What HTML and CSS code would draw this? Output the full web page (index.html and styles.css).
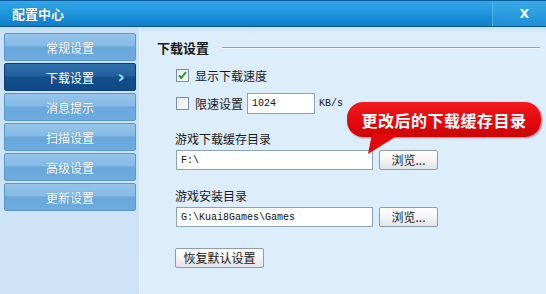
FILE: index.html
```html
<!DOCTYPE html>
<html lang="zh-CN">
<head>
<meta charset="utf-8">
<title>配置中心</title>
<link rel="stylesheet" href="styles.css">
</head>
<body>
<div class="window">
  <div class="titlebar">
    <span class="title">配置中心</span>
    <span class="close">X</span>
  </div>
  <div class="main">
    <nav class="sidebar">
      <div class="nav-item">常规设置</div>
      <div class="nav-item active">下载设置<span class="chev">›</span></div>
      <div class="nav-item">消息提示</div>
      <div class="nav-item">扫描设置</div>
      <div class="nav-item">高级设置</div>
      <div class="nav-item">更新设置</div>
    </nav>
    <section class="content">
      <div class="section-head"><span>下载设置</span><span class="rule"></span></div>
      <div class="check-row first">
        <span class="checkbox"><svg width="13" height="13" viewBox="0 0 13 13"><path d="M3 6.5 L5.3 9 L10 3.2" fill="none" stroke="#2f9a2a" stroke-width="2"/></svg></span>
        <span>显示下载速度</span>
      </div>
      <div class="check-row second">
        <span class="checkbox"></span>
        <span>限速设置</span>
        <span class="input small">1024</span>
        <span class="unit">KB/s</span>
      </div>
      <div class="field-label first-label">游戏下载缓存目录</div>
      <div class="path-row">
        <span class="input path">F:\</span>
        <span class="btn browse">浏览...</span>
      </div>
      <div class="field-label">游戏安装目录</div>
      <div class="path-row">
        <span class="input path">G:\Kuai8Games\Games</span>
        <span class="btn browse">浏览...</span>
      </div>
      <div class="restore-row"><span class="btn restore">恢复默认设置</span></div>

      <div class="bubble">
        <svg class="bubble-tail" width="40" height="22" viewBox="0 0 40 22"><path d="M6 0 L34 0 L2 20 Z" fill="#e4080c"/></svg>
        <span class="bubble-text">更改后的下载缓存目录</span>
      </div>
    </section>
  </div>
</div>
</body>
</html>
```

FILE: styles.css
```css
* { box-sizing: border-box; }
html, body { margin: 0; padding: 0; }
body {
  width: 546px;
  height: 294px;
  overflow: hidden;
  font-family: "Noto Sans CJK SC", "DejaVu Sans", sans-serif;
  font-size: 12px;
  color: #1a1a1a;
}
.window {
  width: 546px;
  height: 294px;
  display: flex;
  flex-direction: column;
  background: #dcedfb;
}
.titlebar {
  height: 27px;
  flex: none;
  display: flex;
  align-items: center;
  justify-content: space-between;
  background: linear-gradient(#33a7e8 0%, #1f97de 45%, #0f7dc9 100%);
  border-top: 1px solid #0b5c9c;
  border-bottom: 1px solid #0a558f;
  padding-left: 12px;
}
.title {
  color: #fff;
  font-weight: bold;
  font-size: 13px;
  line-height: 16px;
  text-shadow: 0 0 1px #0a4f86;
}
.close {
  width: 54px;
  height: 25px;
  display: flex;
  align-items: center;
  justify-content: center;
  color: #fff;
  font-family: "DejaVu Sans", sans-serif;
  font-weight: bold;
  font-size: 12px;
  border-left: 1px solid #4fb0e6;
  background: linear-gradient(#3aa9e7, #1e8fd8);
  padding-left: 10px;
}
.main {
  flex: 1;
  display: flex;
  background: linear-gradient(#c4e2f6 0px, #dcedfb 6px);
}
.sidebar {
  width: 140px;
  flex: none;
  display: flex;
  flex-direction: column;
  gap: 2px;
  padding: 6px 3px 0 4px;
  background: linear-gradient(#c2def4 0px, #cbe2f6 6px, #cfe5f7 100%);
  border-right: 1px solid #e6f2fc;
}
.nav-item {
  position: relative;
  height: 28px;
  display: flex;
  align-items: center;
  justify-content: center;
  color: #fff;
  font-size: 12px;
  border: 1px solid #5a97cf;
  border-radius: 2px;
  background: linear-gradient(#94c4ea 0%, #86bbe6 45%, #6aa8dc 50%, #6eacdf 100%);
  text-shadow: 0 0 1px #4d86bb;
}
.nav-item.active {
  border-color: #0e3f73;
  background: linear-gradient(#2d6fac 0%, #22619d 45%, #134f8c 50%, #0f4886 100%);
  text-shadow: none;
}
.chev {
  position: absolute;
  right: 10px;
  top: 3px;
  font-size: 18px;
  line-height: 20px;
  font-weight: bold;
  color: #9fe3ff;
  font-family: "DejaVu Sans", sans-serif;
}
.content {
  position: relative;
  flex: 1;
  display: flex;
  flex-direction: column;
  padding: 13px 6px 0 17px;
}
.section-head {
  height: 16px;
  display: flex;
  align-items: center;
  gap: 13px;
  font-weight: bold;
  font-size: 13px;
  line-height: 16px;
}
.rule {
  flex: 1;
  height: 2px;
  border-top: 1px solid #86a9c9;
  border-bottom: 1px solid #f3f9fe;
}
.check-row {
  display: flex;
  align-items: center;
  padding-left: 19px;
  height: 21px;
  line-height: 16px;
}
.check-row.first { margin-top: 9px; }
.check-row.second { margin-top: 7px; }
.checkbox {
  width: 13px;
  height: 13px;
  margin-right: 6px;
  border: 1px solid #7a8ea5;
  background: linear-gradient(135deg, #e4e8ec, #ffffff);
  display: flex;
  align-items: center;
  justify-content: center;
}
.checkbox svg { display: block; margin: -1px; }
.input {
  height: 21px;
  background: #fff;
  border: 1px solid #8aa3bc;
  display: flex;
  align-items: center;
  padding-left: 4px;
  font-family: "Liberation Mono", monospace;
  font-size: 10px;
  color: #111;
}
.input.small {
  width: 68px;
  margin-left: 4px;
}
.unit {
  margin-left: 4px;
  font-family: "Liberation Mono", monospace;
  font-size: 10px;
}
.field-label {
  margin-top: 18px;
  height: 16px;
  line-height: 16px;
  padding-left: 18px;
}
.field-label.first-label { margin-top: 17px; }
.path-row {
  margin-top: 3px;
  display: flex;
  gap: 6px;
  padding-left: 19px;
  height: 20px;
}
.input.path {
  width: 197px;
  height: 20px;
}
.btn {
  height: 20px;
  display: flex;
  align-items: center;
  justify-content: center;
  border: 1px solid #8f9cab;
  border-radius: 2px;
  background: linear-gradient(#ffffff 0%, #f4f4f4 50%, #e2e4e7 100%);
  color: #1a1a1a;
  font-size: 12px;
  line-height: 16px;
}
.browse { width: 59px; }
.restore-row {
  margin-top: 21px;
  padding-left: 18px;
  display: flex;
}
.restore { width: 89px; }
.bubble {
  position: absolute;
  left: 207px;
  top: 75px;
  width: 194px;
  height: 35px;
  border-radius: 16px;
  background: linear-gradient(#f21a1e 0%, #e2080c 60%, #c80508 100%);
  box-shadow: 1px 1px 2px rgba(90, 0, 0, 0.45);
  display: flex;
  align-items: center;
  justify-content: center;
}
.bubble-tail {
  position: absolute;
  left: 19px;
  top: 32px;
}
.bubble-text {
  position: relative;
  color: #fff;
  font-weight: bold;
  font-size: 16px;
  letter-spacing: 0.5px;
  line-height: 20px;
}
```
